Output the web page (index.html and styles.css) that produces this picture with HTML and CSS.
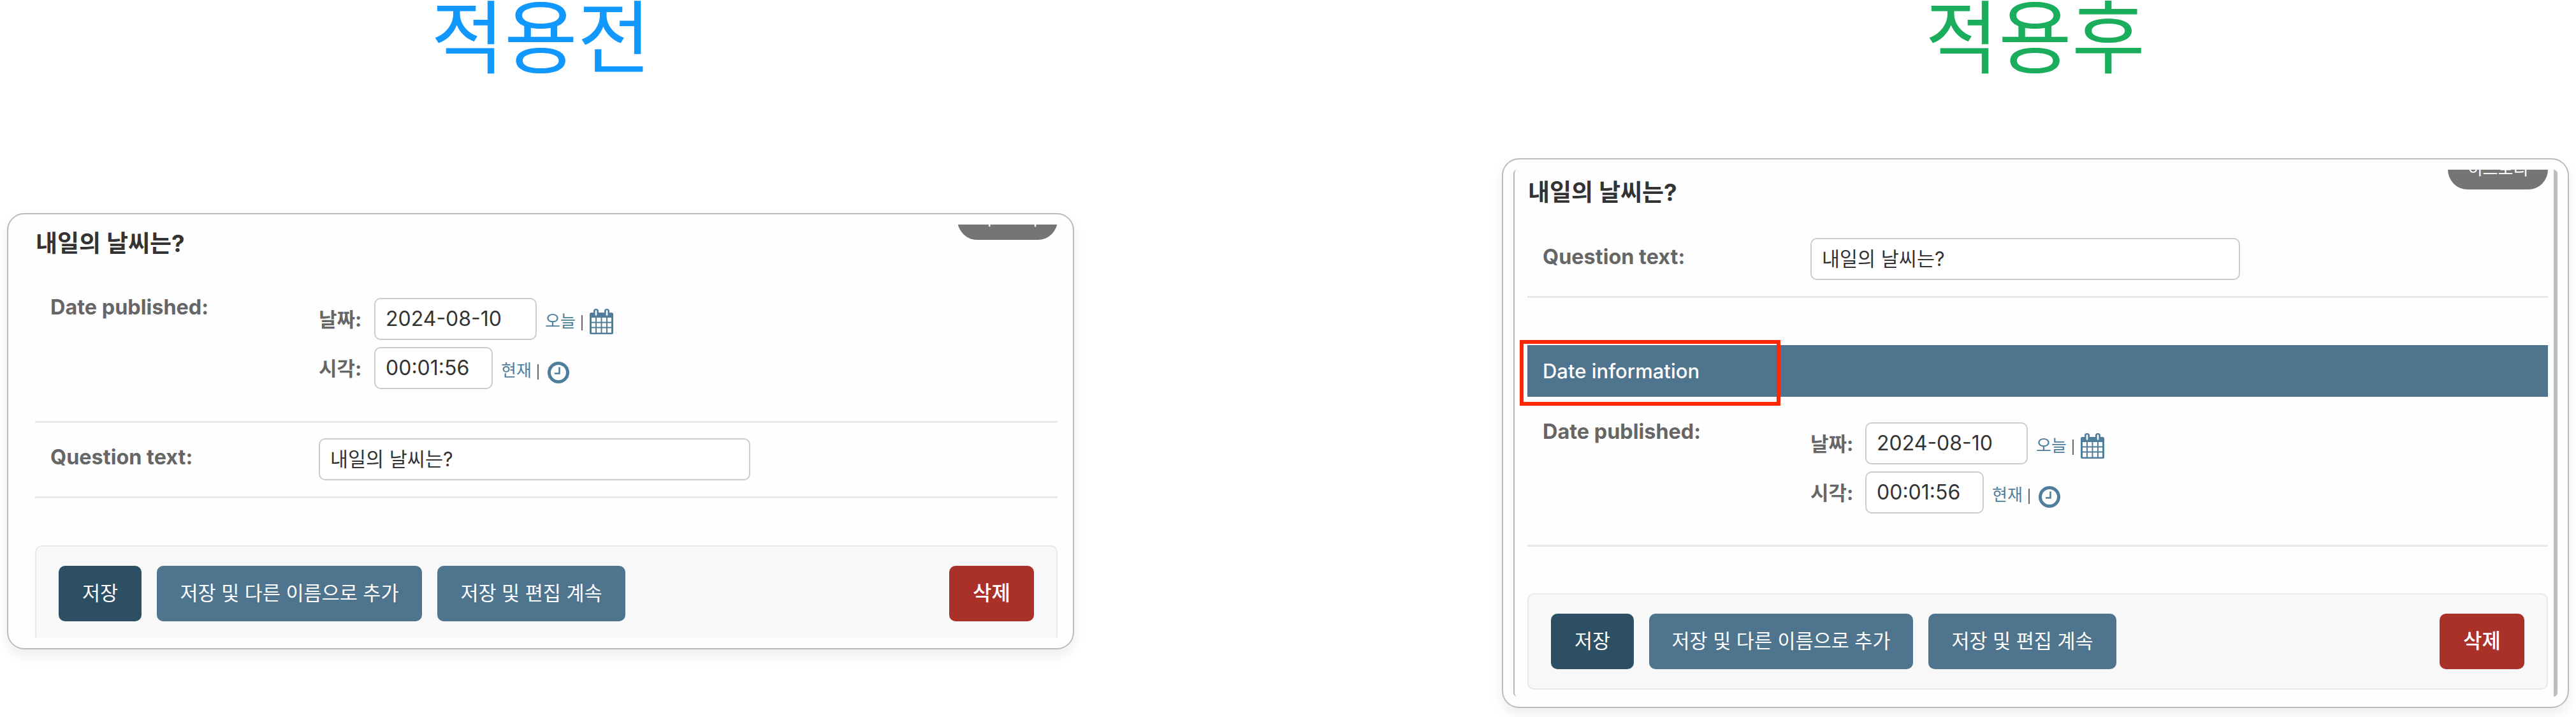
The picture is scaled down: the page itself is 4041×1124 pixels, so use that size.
FILE: index.html
```html
<!DOCTYPE html>
<html lang="ko">
<head>
    <meta charset="UTF-8">
    <meta name="viewport" content="width=device-width, initial-scale=1.0">
    <title>적용전 / 적용후</title>
    <link rel="stylesheet" href="styles.css">
</head>
<body>
    <!-- Shared icons -->
    <svg class="icon-defs" width="0" height="0">
        <symbol id="icon-calendar" viewBox="0 0 37 40" preserveAspectRatio="none">
            <path fill="currentColor" fill-rule="evenodd" d="M2.500 6H6V3.500a4 3.500 0 0 1 8 0V6H23V3.500a4 3.500 0 0 1 8 0V6H34.500Q37 6 37 8.500V37.500Q37 40 34.500 40H2.500Q0 40 0 37.500V8.500Q0 6 2.500 6ZM3 14V20.500H9V14ZM11 14V20.500H17.500V14ZM19.500 14V20.500H26V14ZM28 14V20.500H34V14ZM3 22.500V28.500H9V22.500ZM11 22.500V28.500H17.500V22.500ZM19.500 22.500V28.500H26V22.500ZM28 22.500V28.500H34V22.500ZM3 30.500V37.500H9V30.500ZM11 30.500V37.500H17.500V30.500ZM19.500 30.500V37.500H26V30.500ZM28 30.500V37.500H34V30.500Z"/>
            <path stroke="#fff" stroke-width="2.600" stroke-linecap="round" d="M10 3.500V9.500M27 3.500V9.500"/>
        </symbol>
        <symbol id="icon-clock" viewBox="0 0 34 34">
            <circle cx="17" cy="17" r="14.500" fill="none" stroke="currentColor" stroke-width="5"/>
            <path fill="none" stroke="currentColor" stroke-width="2.600" d="M18.500 8.500V18.500H11"/>
        </symbol>
    </svg>

    <section class="column before">
        <h1>적용전</h1>
        <div class="card">
            <div class="screen">
                <a class="history">히스토리</a>
                <h2>내일의 날씨는?</h2>
                <div class="row row-date">
                    <label>Date published:</label>
                    <div class="datetime">
                        <div class="line">
                            <span class="name">날짜:</span>
                            <span class="input input-date">2024-08-10</span>
                            <span class="shortcut"><a>오늘</a><i></i><svg class="calendar"><use href="#icon-calendar"/></svg></span>
                        </div>
                        <div class="line">
                            <span class="name">시각:</span>
                            <span class="input input-time">00:01:56</span>
                            <span class="shortcut"><a>현재</a><i></i><svg class="clock"><use href="#icon-clock"/></svg></span>
                        </div>
                    </div>
                </div>
                <div class="row row-text">
                    <label>Question text:</label>
                    <span class="input input-text">내일의 날씨는?</span>
                </div>
                <div class="submit-row">
                    <a class="button save">저장</a>
                    <a class="button add">저장 및 다른 이름으로 추가</a>
                    <a class="button edit">저장 및 편집 계속</a>
                    <a class="button delete">삭제</a>
                </div>
            </div>
        </div>
    </section>

    <section class="column after">
        <h1>적용후</h1>
        <div class="card">
            <div class="screen">
                <a class="history">히스토리</a>
                <h2>내일의 날씨는?</h2>
                <div class="row row-text">
                    <label>Question text:</label>
                    <span class="input input-text">내일의 날씨는?</span>
                </div>
                <h3>Date information</h3>
                <div class="row row-date">
                    <label>Date published:</label>
                    <div class="datetime">
                        <div class="line">
                            <span class="name">날짜:</span>
                            <span class="input input-date">2024-08-10</span>
                            <span class="shortcut"><a>오늘</a><i></i><svg class="calendar"><use href="#icon-calendar"/></svg></span>
                        </div>
                        <div class="line">
                            <span class="name">시각:</span>
                            <span class="input input-time">00:01:56</span>
                            <span class="shortcut"><a>현재</a><i></i><svg class="clock"><use href="#icon-clock"/></svg></span>
                        </div>
                    </div>
                </div>
                <div class="submit-row">
                    <a class="button save">저장</a>
                    <a class="button add">저장 및 다른 이름으로 추가</a>
                    <a class="button edit">저장 및 편집 계속</a>
                    <a class="button delete">삭제</a>
                </div>
            </div>
        </div>
    </section>
</body>
</html>
```
FILE: styles.css
```css
* {
    margin: 0;
    padding: 0;
    box-sizing: border-box;
}

body {
    display: flex;
    justify-content: space-between;
    width: 4041px;
    height: 1124px;
    padding: 0 11px;
    overflow: hidden;
    background-color: #fff;
    color: #333;
    font-family: Inter, "Noto Sans CJK KR", sans-serif;
    font-size: 31px;
}

.icon-defs {
    position: absolute;
}

.column {
    width: 1674px;
}

h1 {
    height: 120px;
    line-height: 120px;
    font-size: 125px;
    font-weight: 400;
}

.before h1 {
    padding-left: 665px;
    color: #1198ff;
}

.after h1 {
    padding-left: 664px;
    color: #1aae5c;
}

/* Rounded window around each admin form */
.card {
    border: 2px solid #bbb;
    border-radius: 27px;
    background-color: #fefefe;
    box-shadow: 0 10px 20px rgba(0, 0, 0, 0.07);
}

.before .card {
    height: 684px;
    margin-top: 214px;
    padding: 16px 24px 0 42px;
}

.after .card {
    height: 862px;
    margin-top: 128px;
    padding: 16px 16px 0 16px;
}

.screen {
    position: relative;
    overflow: hidden;
}

.before .screen {
    height: 648px;
}

.after .screen {
    height: 826px;
    padding: 0 9px 0 20px;
    border-left: 2px solid #b5b5b5;
    border-right: 6px solid #bdbdbd;
    border-radius: 6px;
}

/* History button, cut off by the top of the screen */
.history {
    position: absolute;
    width: 157px;
    height: 62px;
    line-height: 60px;
    border-radius: 31px;
    background-color: #757575;
    color: #fff;
    font-size: 26px;
    text-align: center;
}

.before .history {
    top: -38px;
    right: 0;
}

.after .history {
    top: -31px;
    right: 9px;
}

h2 {
    height: 60px;
    padding-left: 1px;
    line-height: 60px;
    font-size: 37px;
    font-weight: 700;
}

.after h2 {
    margin-top: 6px;
}

h3 {
    position: relative;
    height: 81px;
    margin-top: 74px;
    padding-left: 24px;
    background-color: #4f748e;
    color: #fff;
    font-size: 31px;
    font-weight: 500;
    line-height: 82px;
}

/* Highlight around the new fieldset title */
h3::after {
    content: "";
    position: absolute;
    top: -8px;
    left: -12px;
    width: 409px;
    height: 103px;
    border: 6px solid #ff2600;
    box-sizing: border-box;
}

.row {
    display: flex;
    padding-left: 24px;
    border-bottom: 3px solid #e8e8e8;
}

.row label {
    width: 421px;
    line-height: 30px;
    color: #666;
    font-size: 32.4px;
    font-weight: 700;
}

.after .row label {
    width: 420px;
}

.before .row-date {
    height: 196px;
    margin-top: 55px;
}

.before .row-text {
    height: 118px;
    padding-top: 24px;
}

.after .row-text {
    height: 94px;
    margin-top: 41px;
}

.after .row-date {
    height: 195px;
    margin-top: 40px;
}

.row-text label {
    margin-top: 15px;
}

.input {
    height: 66px;
    padding-left: 16px;
    border: 2px solid #ccc;
    border-radius: 10px;
    background-color: #fff;
    font-size: 32px;
    line-height: 62px;
}

.input-date {
    width: 255px;
}

.input-time {
    width: 186px;
}

.input-text {
    width: 677px;
    font-size: 30.5px;
}

.after .input-text {
    width: 674px;
}

.line {
    display: flex;
    height: 66px;
    margin-bottom: 11px;
}

.name {
    width: 87px;
    color: #666;
    font-weight: 700;
    line-height: 67px;
}

.after .name {
    width: 86px;
}

.shortcut {
    display: flex;
    align-items: center;
    margin-left: 13px;
    color: #4f7e9c;
    font-size: 26px;
}

.shortcut a {
    margin-top: 3px;
}

.shortcut i {
    width: 2px;
    height: 24px;
    margin: 12px 11px 0 9px;
    background-color: #666;
}

.calendar {
    width: 37px;
    height: 40px;
    margin-top: 8px;
}

.clock {
    width: 34px;
    height: 34px;
    margin-top: 14px;
    margin-left: 3px;
}

.submit-row {
    display: flex;
    gap: 24px;
    height: 151px;
    padding: 30px 35px;
    border: 2px solid #e8e8e8;
    border-radius: 10px;
    background-color: #f8f8f8;
}

.before .submit-row {
    margin-top: 74px;
}

.after .submit-row {
    margin-top: 73px;
}

.button {
    height: 87px;
    line-height: 86px;
    border-radius: 10px;
    background-color: #4f748e;
    color: #fff;
    font-size: 30.5px;
    text-align: center;
    white-space: nowrap;
}

.save {
    width: 130px;
    background-color: #2c4f64;
}

.add {
    width: 416px;
}

.after .add {
    width: 414px;
}

.edit {
    width: 295px;
}

.delete {
    width: 133px;
    margin-left: auto;
    background-color: #aa302a;
    font-size: 32px;
    font-weight: 500;
}
```
